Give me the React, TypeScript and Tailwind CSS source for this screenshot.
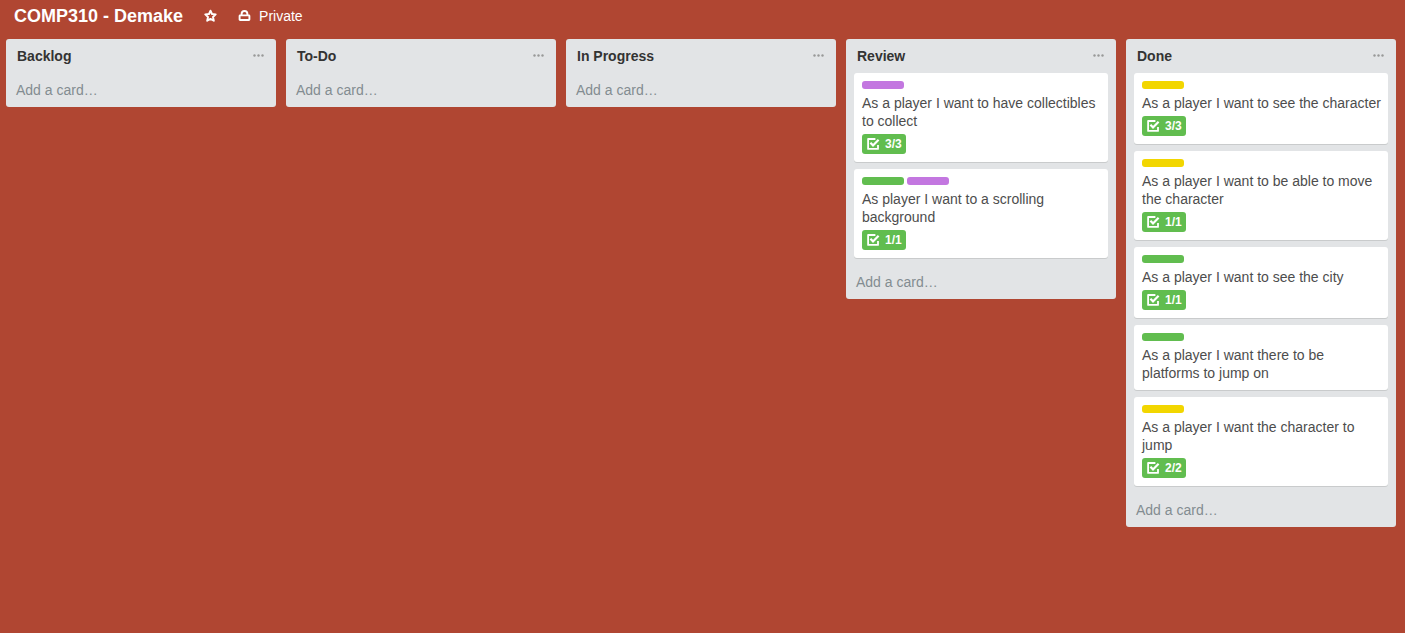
type Label = "purple" | "green" | "yellow";

interface CardData {
  title: string;
  labels: Label[];
  checklist?: string;
}

interface ListData {
  title: string;
  cards: CardData[];
}

const labelColors: Record<Label, string> = {
  purple: "bg-[#c377e0]",
  green: "bg-[#61bd4f]",
  yellow: "bg-[#f2d600]",
};

const lists: ListData[] = [
  { title: "Backlog", cards: [] },
  { title: "To-Do", cards: [] },
  { title: "In Progress", cards: [] },
  {
    title: "Review",
    cards: [
      { title: "As a player I want to have collectibles to collect", labels: ["purple"], checklist: "3/3" },
      { title: "As player I want to a scrolling background", labels: ["green", "purple"], checklist: "1/1" },
    ],
  },
  {
    title: "Done",
    cards: [
      { title: "As a player I want to see the character", labels: ["yellow"], checklist: "3/3" },
      { title: "As a player I want to be able to move the character", labels: ["yellow"], checklist: "1/1" },
      { title: "As a player I want to see the city", labels: ["green"], checklist: "1/1" },
      { title: "As a player I want there to be platforms to jump on", labels: ["green"] },
      { title: "As a player I want the character to jump", labels: ["yellow"], checklist: "2/2" },
    ],
  },
];

function StarIcon() {
  return (
    <svg className="size-3.5" viewBox="0 0 14 14" fill="none" stroke="currentColor" strokeWidth="1.9" strokeLinejoin="round" aria-hidden="true">
      <path d="M6.5 1.7 8 5 11.7 5.4 9 8 9.8 11.8 6.5 9.9 3.2 11.8 4 8 1.3 5.4 5 5Z" />
    </svg>
  );
}

function LockIcon() {
  return (
    <svg className="size-3.5" viewBox="0 0 14 14" fill="none" stroke="currentColor" strokeWidth="1.9" aria-hidden="true">
      <rect x="1.6" y="6.4" width="9.8" height="4.6" rx="0.5" />
      <path d="M3.6 6.4V4.9a2.9 2.9 0 0 1 5.8 0v1.5" />
    </svg>
  );
}

function ChecklistIcon() {
  return (
    <svg className="size-3.5" viewBox="0 0 14 14" fill="none" stroke="currentColor" aria-hidden="true">
      <path d="M9.4 2H2.1V11.9H12V8" strokeWidth="1.8" strokeLinejoin="round" />
      <path d="M4.4 5.8 7 8.4 12.6 2.7" strokeWidth="2.2" />
    </svg>
  );
}

function MenuIcon() {
  return (
    <svg className="h-3 w-3" viewBox="0 0 12 12" fill="currentColor" aria-hidden="true">
      <circle cx="2.5" cy="5.5" r="1.2" />
      <circle cx="6.5" cy="5.5" r="1.2" />
      <circle cx="10.5" cy="5.5" r="1.2" />
    </svg>
  );
}

function Card({ card }: { card: CardData }) {
  return (
    <li className="rounded-[3px] bg-white py-2 pr-1.5 pl-2 shadow-[0_1px_0_#c9cbcc]">
      <div className="mb-[5px] flex gap-[3px]">
        {card.labels.map((label) => (
          <span key={label} className={`h-2 w-[42px] rounded-[3px] ${labelColors[label]}`} />
        ))}
      </div>
      <p className="text-sm leading-[18px] text-[#4d4d4d]">{card.title}</p>
      {card.checklist && (
        <div className="mt-1 flex h-5 w-11 items-center gap-[5px] rounded-[3px] bg-[#61bd4f] pl-1 text-white">
          <ChecklistIcon />
          <span className="text-xs font-bold">{card.checklist}</span>
        </div>
      )}
    </li>
  );
}

function List({ list }: { list: ListData }) {
  return (
    <section className="w-[270px] shrink-0 rounded-[3px] bg-[#e2e4e6]">
      <header className="flex h-[34px] items-center justify-between pr-3 pl-[11px]">
        <h2 className="text-sm font-bold text-[#333333]">{list.title}</h2>
        <button type="button" aria-label={`${list.title} list actions`} className="text-[#999999]">
          <MenuIcon />
        </button>
      </header>
      {list.cards.length > 0 && (
        <ul className="flex flex-col gap-[7px] px-2 pb-[7px]">
          {list.cards.map((card) => (
            <Card key={card.title} card={card} />
          ))}
        </ul>
      )}
      <button type="button" className="flex h-[34px] w-full items-center px-2.5 text-sm text-[#838c91]">
        Add a card…
      </button>
    </section>
  );
}

export default function App() {
  return (
    <div className="min-h-screen overflow-hidden bg-[#b04632] font-['Liberation_Sans',Arial,sans-serif]">
      <header className="flex h-8 items-center px-3.5 text-white">
        <h1 className="text-lg font-bold">COMP310 - Demake</h1>
        <button type="button" aria-label="Star board" className="ml-[21px]">
          <StarIcon />
        </button>
        <button type="button" className="ml-5 flex items-center gap-[7px] text-sm">
          <LockIcon />
          Private
        </button>
      </header>
      <main className="flex items-start gap-2.5 px-1.5 pt-[7px] pb-2">
        {lists.map((list) => (
          <List key={list.title} list={list} />
        ))}
      </main>
    </div>
  );
}
